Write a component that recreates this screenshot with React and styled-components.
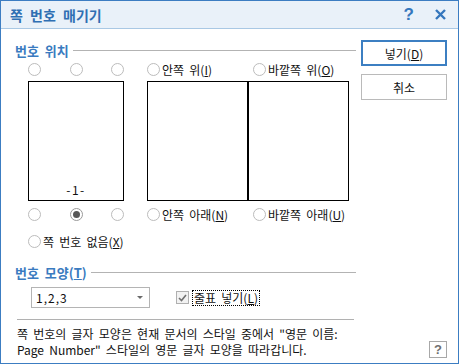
import React from "react";
import styled, { createGlobalStyle } from "styled-components";

const GlobalStyle = createGlobalStyle`
  html, body {
    margin: 0;
    padding: 0;
    background: #fff;
  }
  body {
    font-family: "Noto Sans CJK KR", "Noto Sans", sans-serif;
    font-size: 12px;
    word-spacing: 2.5px;
    color: #111;
  }
`;

const Dialog = styled.div`
  width: 459px;
  height: 364px;
  box-sizing: border-box;
  border: 1px solid #3c7dc2;
  background: #fff;
  display: flex;
  flex-direction: column;
`;

const TitleBar = styled.div`
  flex: none;
  height: 27px;
  display: flex;
  align-items: center;
  padding: 0 12px 0 9px;
  background: #e9f1f9;
  border-bottom: 1px solid #a9c8e4;
`;

const Title = styled.div`
  flex: 1;
  font-size: 14px;
  font-weight: bold;
  word-spacing: 4px;
  color: #2f6fb3;
`;

const TitleIcon = styled.span`
  display: flex;
  align-items: center;
  justify-content: center;
  color: #3577bd;
  font-weight: bold;
  font-size: 17px;
  font-family: "Liberation Sans", sans-serif;
  margin-left: ${p => p.$gap || 0}px;
`;

const Body = styled.div`
  flex: 1;
  display: flex;
  gap: 5px;
  padding: 11px 11px 7px 14px;
`;

const Main = styled.div`
  width: 341px;
  padding-top: 2px;
  display: flex;
  flex-direction: column;
`;

const SectionHead = styled.div`
  display: flex;
  align-items: center;
  gap: 4px;
  height: 16px;
  margin-top: ${p => p.$top || 0}px;
  font-size: 13px;
  font-weight: bold;
  word-spacing: 3px;
  color: #3a7bc0;
  white-space: nowrap;
  &::after {
    content: "";
    flex: 1;
    height: 1px;
    background: #b3b3b3;
  }
`;

const Position = styled.div`
  display: flex;
  margin-top: 5px;
  padding-left: 13px;
`;

const LeftGroup = styled.div`
  width: 96px;
  display: flex;
  flex-direction: column;
`;

const RadioRow = styled.div`
  display: flex;
  justify-content: space-between;
  height: 13px;
`;

const Page = styled.div`
  height: 120px;
  box-sizing: border-box;
  border: 1px solid #000;
  margin: 5px 0 7px;
  display: flex;
  align-items: flex-end;
  justify-content: center;
  padding-bottom: 3px;
  line-height: 14px;
  letter-spacing: 1.5px;
`;

const RightGroup = styled.div`
  width: 202px;
  margin-left: 23px;
  display: flex;
  flex-direction: column;
`;

const OptionRow = styled.div`
  display: grid;
  grid-template-columns: 106px auto;
  height: 13px;
`;

const Spread = styled.div`
  display: flex;
  height: 120px;
  margin: 5px 0 7px;
`;

const SpreadPage = styled.div`
  width: 101px;
  box-sizing: border-box;
  border: 1px solid #000;
`;

const Option = styled.label`
  display: inline-flex;
  align-items: center;
  gap: 2px;
  height: 13px;
  line-height: 13px;
  white-space: nowrap;
`;

const Radio = styled.span`
  flex: none;
  width: 13px;
  height: 13px;
  box-sizing: border-box;
  border-radius: 50%;
  border: 1px solid ${p => (p.$checked ? "#9a9a9a" : "#bcbcbc")};
  background: #fff;
  display: flex;
  align-items: center;
  justify-content: center;
  &::after {
    content: "";
    display: ${p => (p.$checked ? "block" : "none")};
    width: 7px;
    height: 7px;
    border-radius: 50%;
    background: #575757;
  }
`;

const NoneRow = styled.div`
  margin-top: 13px;
  padding-left: 13px;
`;

const FormatRow = styled.div`
  display: flex;
  align-items: center;
  margin-top: 7px;
  padding-left: 16px;
`;

const Select = styled.div`
  width: 119px;
  height: 21px;
  box-sizing: border-box;
  border: 1px solid #b4b4b4;
  display: flex;
  align-items: center;
  justify-content: space-between;
  padding: 0 6px 0 4px;
  letter-spacing: 1px;
  &::after {
    content: "";
    border-left: 3px solid transparent;
    border-right: 3px solid transparent;
    border-top: 3px solid #6a6a6a;
  }
`;

const CheckGroup = styled.div`
  display: flex;
  align-items: center;
  margin-left: 26px;
`;

const CheckBox = styled.span`
  width: 13px;
  height: 13px;
  box-sizing: border-box;
  border: 1px solid #b0b0b0;
  background: #f2f2f2;
  display: flex;
  align-items: center;
  justify-content: center;
`;

const FocusLabel = styled.span`
  margin-left: 3px;
  border: 1px dotted #000;
  padding: 0 1px;
  line-height: 14px;
`;

const Divider = styled.div`
  height: 1px;
  background: #b1b1b1;
  margin: 11px 2px 0;
`;

const Note = styled.p`
  margin: 6px 0 0;
  padding-left: 2px;
  line-height: 16px;
  white-space: nowrap;
`;

const Side = styled.div`
  width: 86px;
  display: flex;
  flex-direction: column;
  gap: 8px;
`;

const Button = styled.div`
  height: 26px;
  box-sizing: border-box;
  border: ${p => (p.$primary ? "2px solid #3c7fc2" : "1px solid #bababa")};
  background: #fff;
  display: flex;
  align-items: center;
  justify-content: center;
`;

const HelpButton = styled.div`
  margin-top: auto;
  align-self: flex-end;
  width: 18px;
  height: 17px;
  box-sizing: border-box;
  border: 1px solid #a8a8a8;
  display: flex;
  align-items: center;
  justify-content: center;
  color: #707070;
  font-weight: bold;
  font-size: 13px;
  font-family: "Liberation Sans", sans-serif;
`;

const LabeledRadio = ({ children, checked }) => (
  <Option>
    <Radio $checked={checked} />
    <span>{children}</span>
  </Option>
);

export default function App() {
  return (
    <>
      <GlobalStyle />
      <Dialog>
        <TitleBar>
          <Title>쪽 번호 매기기</Title>
          <TitleIcon>?</TitleIcon>
          <TitleIcon $gap={21}>
            <svg width="11" height="11" viewBox="0 0 11 11">
              <path d="M1 1 L10 10 M10 1 L1 10" stroke="#3577bd" strokeWidth="2.4" fill="none" />
            </svg>
          </TitleIcon>
        </TitleBar>
        <Body>
          <Main>
            <SectionHead>번호 위치</SectionHead>
            <Position>
              <LeftGroup>
                <RadioRow>
                  <Radio />
                  <Radio />
                  <Radio />
                </RadioRow>
                <Page>-1-</Page>
                <RadioRow>
                  <Radio />
                  <Radio $checked />
                  <Radio />
                </RadioRow>
              </LeftGroup>
              <RightGroup>
                <OptionRow>
                  <LabeledRadio>안쪽 위(<u>I</u>)</LabeledRadio>
                  <LabeledRadio>바깥쪽 위(<u>O</u>)</LabeledRadio>
                </OptionRow>
                <Spread>
                  <SpreadPage />
                  <SpreadPage />
                </Spread>
                <OptionRow>
                  <LabeledRadio>안쪽 아래(<u>N</u>)</LabeledRadio>
                  <LabeledRadio>바깥쪽 아래(<u>U</u>)</LabeledRadio>
                </OptionRow>
              </RightGroup>
            </Position>
            <NoneRow>
              <LabeledRadio>쪽 번호 없음(<u>X</u>)</LabeledRadio>
            </NoneRow>
            <SectionHead $top={13}>
              <span>
                번호 모양(<u>T</u>)
              </span>
            </SectionHead>
            <FormatRow>
              <Select>1,2,3</Select>
              <CheckGroup>
                <CheckBox>
                  <svg width="9" height="8" viewBox="0 0 9 8">
                    <path d="M1 4 L3.5 6.5 L8 1" stroke="#707070" strokeWidth="1.6" fill="none" />
                  </svg>
                </CheckBox>
                <FocusLabel>
                  줄표 넣기(<u>L</u>)
                </FocusLabel>
              </CheckGroup>
            </FormatRow>
            <Divider />
            <Note>
              쪽 번호의 글자 모양은 현재 문서의 스타일 중에서 "영문 이름:
              <br />
              Page Number" 스타일의 영문 글자 모양을 따라갑니다.
            </Note>
          </Main>
          <Side>
            <Button $primary>
              <span>
                넣기(<u>D</u>)
              </span>
            </Button>
            <Button>취소</Button>
            <HelpButton>?</HelpButton>
          </Side>
        </Body>
      </Dialog>
    </>
  );
}
